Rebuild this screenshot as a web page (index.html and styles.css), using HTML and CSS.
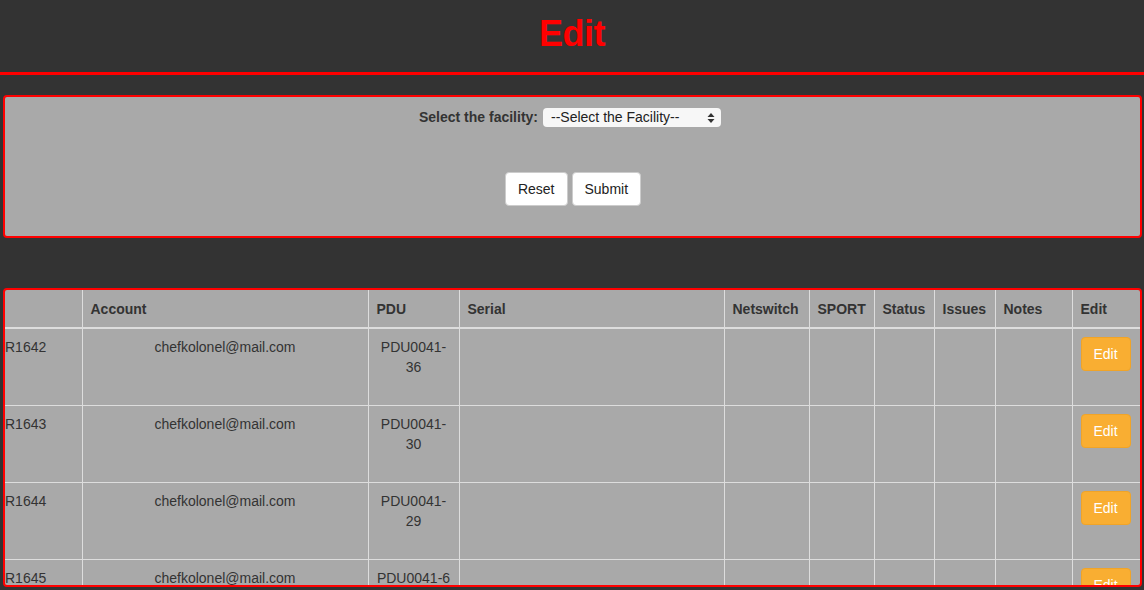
FILE: index.html
```html
<!DOCTYPE html>
<html>
<head>
<meta charset="utf-8">
<title>Edit</title>
<link rel="stylesheet" href="styles.css">
</head>
<body>
<header class="page-header">
  <h1 class="title">Edit</h1>
</header>
<section class="panel form-panel">
  <div class="field-row">
    <label class="field-label" for="facility">Select the facility:</label>
    <span class="select-wrap">
      <select id="facility" class="facility-select">
        <option>--Select the Facility--</option>
      </select>
      <svg class="select-arrows" width="8" height="12" viewBox="0 0 8 12"><path d="M4 1 L7.5 5 H0.5 Z M4 11 L7.5 7 H0.5 Z" fill="#333"/></svg>
    </span>
  </div>
  <div class="button-row">
    <button class="btn">Reset</button>
    <button class="btn">Submit</button>
  </div>
</section>
<section class="panel table-panel">
  <table class="data-table">
    <colgroup>
      <col class="c-id"><col class="c-account"><col class="c-pdu"><col class="c-serial"><col class="c-net"><col class="c-sport"><col class="c-status"><col class="c-issues"><col class="c-notes"><col class="c-edit">
    </colgroup>
    <thead>
      <tr>
        <th class="first"></th><th>Account</th><th>PDU</th><th>Serial</th><th>Netswitch</th><th>SPORT</th><th>Status</th><th>Issues</th><th>Notes</th><th>Edit</th>
      </tr>
    </thead>
    <tbody>
      <tr>
        <td class="first">R1642</td><td class="center">chefkolonel@mail.com</td><td class="center">PDU0041-36</td><td></td><td></td><td></td><td></td><td></td><td></td><td><button class="btn-edit">Edit</button></td>
      </tr>
      <tr>
        <td class="first">R1643</td><td class="center">chefkolonel@mail.com</td><td class="center">PDU0041-30</td><td></td><td></td><td></td><td></td><td></td><td></td><td><button class="btn-edit">Edit</button></td>
      </tr>
      <tr>
        <td class="first">R1644</td><td class="center">chefkolonel@mail.com</td><td class="center">PDU0041-29</td><td></td><td></td><td></td><td></td><td></td><td></td><td><button class="btn-edit">Edit</button></td>
      </tr>
      <tr>
        <td class="first">R1645</td><td class="center">chefkolonel@mail.com</td><td class="center">PDU0041-6</td><td></td><td></td><td></td><td></td><td></td><td></td><td><button class="btn-edit">Edit</button></td>
      </tr>
    </tbody>
  </table>
</section>
</body>
</html>
```
FILE: styles.css
```css
* { box-sizing: border-box; }
html, body {
  margin: 0;
  background: #333333;
  font-family: "Liberation Sans", Arial, Helvetica, sans-serif;
  font-size: 14px;
  line-height: 20px;
  color: #333333;
  overflow: hidden;
}
.page-header {
  height: 75px;
  border-bottom: 3px solid #ff0000;
  padding-top: 13px;
}
.title {
  margin: 0;
  text-align: center;
  color: #ff0000;
  font-size: 36px;
  line-height: 41px;
  font-weight: bold;
  letter-spacing: -0.5px;
}
.panel {
  margin: 0 2px 0 3px;
  background: #a9a9a9;
  border: 2px solid #ff0000;
  border-radius: 4px;
}
.form-panel {
  margin-top: 20px;
  height: 143px;
  padding-top: 9px;
}
.field-row {
  display: flex;
  justify-content: center;
  align-items: center;
  gap: 5px;
  padding-right: 5px;
  height: 22px;
}
.field-label {
  font-weight: bold;
}
.select-wrap {
  position: relative;
  display: inline-block;
}
.facility-select {
  appearance: none;
  -webkit-appearance: none;
  width: 178px;
  height: 19px;
  border: none;
  border-radius: 4px;
  background: #f7f7f7;
  font-family: inherit;
  font-size: 14px;
  line-height: 19px;
  color: #222;
  padding: 0 0 0 8px;
  display: block;
}
.select-arrows {
  position: absolute;
  right: 6px;
  top: 4px;
}
.button-row {
  display: flex;
  justify-content: center;
  gap: 4px;
  margin-top: 44px;
  padding-left: 1px;
}
.btn {
  font-family: inherit;
  font-size: 14px;
  line-height: 20px;
  color: #222;
  background: #ffffff;
  border: 1px solid #cccccc;
  border-radius: 4px;
  padding: 6px 12px;
  height: 34px;
}
.table-panel {
  margin-top: 50px;
  height: 299px;
  overflow: hidden;
}
.data-table {
  width: 1135px;
  table-layout: fixed;
  border-collapse: collapse;
}
.c-id { width: 77px; }
.c-account { width: 286px; }
.c-pdu { width: 91px; }
.c-serial { width: 265px; }
.c-net { width: 85px; }
.c-sport { width: 65px; }
.c-status { width: 60px; }
.c-issues { width: 61px; }
.c-notes { width: 77px; }
.c-edit { width: 68px; }
.data-table th,
.data-table td {
  border: 1px solid #dddddd;
  padding: 8px;
  vertical-align: top;
  text-align: left;
}
.data-table th {
  font-weight: bold;
  height: 38px;
  padding-top: 9px;
  border-top: none;
  border-bottom: 2px solid #dddddd;
}
.data-table tr > :first-child { border-left: none; }
.data-table td { height: 77px; }
.data-table .first { padding-left: 0; }
.data-table .center { text-align: center; }
.btn-edit {
  font-family: inherit;
  font-size: 14px;
  line-height: 20px;
  color: #ffffff;
  background: #f9ae32;
  border: 1px solid #f0a428;
  border-radius: 4px;
  padding: 6px 12px;
  height: 34px;
  width: 50px;
}
```
